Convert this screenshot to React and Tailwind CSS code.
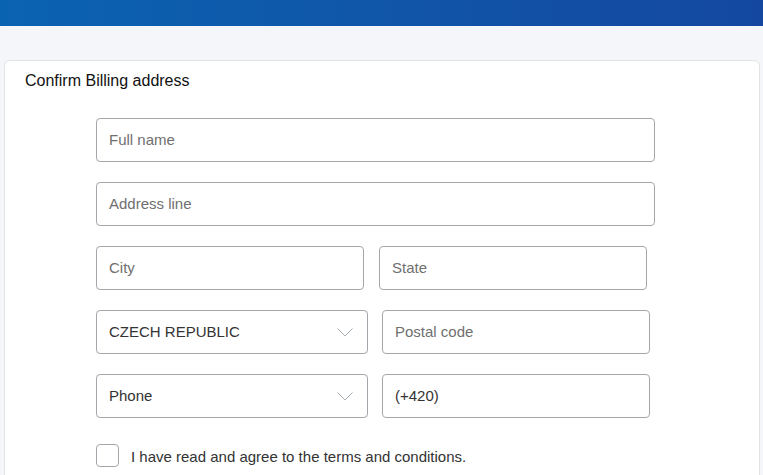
import React from "react";

function Field({ placeholder, value, width }) {
  return (
    <div
      className={`h-[44px] ${width} border border-[#a3a7ab] rounded-[4px] bg-white flex items-center px-3 text-[15px]`}
    >
      {value ? (
        <span className="text-[#333]">{value}</span>
      ) : (
        <span className="text-[#6f6f6f]">{placeholder}</span>
      )}
    </div>
  );
}

function Select({ value, width }) {
  return (
    <div
      className={`h-[44px] ${width} border border-[#a3a7ab] rounded-[4px] bg-white flex items-center justify-between pl-3 pr-[14px] text-[15px] text-[#333]`}
    >
      <span>{value}</span>
      <svg width="16" height="9" viewBox="0 0 16 9" fill="none">
        <path d="M0.5 0.5 L8 8 L15.5 0.5" stroke="#a9b0b5" strokeWidth="1" />
      </svg>
    </div>
  );
}

export default function App() {
  return (
    <div
      className="min-h-[475px] bg-[#f5f6fa] overflow-hidden"
      style={{ fontFamily: '"Liberation Sans", Arial, sans-serif' }}
    >
      {/* Top bar */}
      <div className="h-[26px] bg-linear-to-r from-[#0a63b1] to-[#1448a0]" />

      {/* Card */}
      <div className="mt-[34px] mx-[4px] mr-[3px] bg-white border border-[#e2e3e5] rounded-[6px] min-h-[430px]">
        <div className="pt-[10px] pl-[20px] text-[16px] leading-5 text-[#111]">
          Confirm Billing address
        </div>

        <div className="ml-[91px] mt-[27px] flex flex-col gap-[20px]">
          <Field placeholder="Full name" width="w-[559px]" />
          <Field placeholder="Address line" width="w-[559px]" />
          <div className="flex gap-[15px]">
            <Field placeholder="City" width="w-[268px]" />
            <Field placeholder="State" width="w-[268px]" />
          </div>
          <div className="flex gap-[14px]">
            <Select value="CZECH REPUBLIC" width="w-[272px]" />
            <Field placeholder="Postal code" width="w-[268px]" />
          </div>
          <div className="flex gap-[14px]">
            <Select value="Phone" width="w-[272px]" />
            <Field value="(+420)" width="w-[268px]" />
          </div>
          <label className="mt-[5px] flex items-center gap-[12px] text-[15px] text-[#333]">
            <span className="w-[23px] h-[23px] border border-[#a3a7ab] rounded-[4px] bg-white" />
            <span className="pt-[3px]">I have read and agree to the terms and conditions.</span>
          </label>
        </div>
      </div>
    </div>
  );
}
